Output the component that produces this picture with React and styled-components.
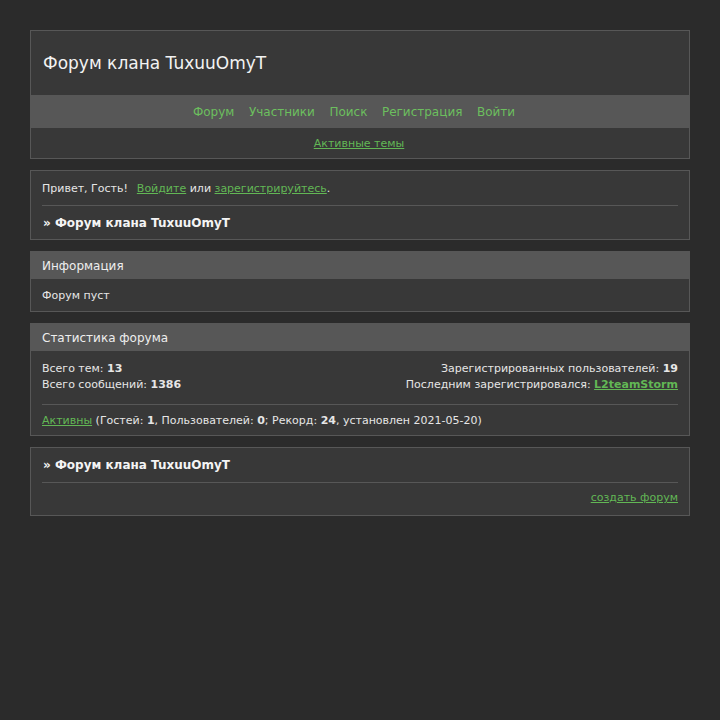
import React from 'react'
import styled, { createGlobalStyle } from 'styled-components'

const GlobalStyle = createGlobalStyle`
  html, body {
    margin: 0;
    padding: 0;
    background: #2b2b2b;
    color: #e6e6e6;
    font-family: "DejaVu Sans", "Liberation Sans", sans-serif;
    font-size: 11px;
  }
`

const Page = styled.div`
  width: 660px;
  margin: 0 auto;
  padding: 30px 0;
  display: flex;
  flex-direction: column;
  gap: 11px;
`

const Panel = styled.div`
  background: #383838;
  border: 1px solid #575757;
`

const Title = styled.h1`
  margin: 0;
  height: 64px;
  display: flex;
  align-items: center;
  padding: 0 12px;
  font-size: 17px;
  font-weight: normal;
  color: #f2f2f2;
`

const NavBar = styled.nav`
  background: #575757;
  height: 33px;
  display: flex;
  justify-content: center;
  align-items: center;
  gap: 14.5px;
  padding-right: 12px;
  font-size: 12px;
`

const NavLink = styled.a`
  color: #6cbf5e;
  text-decoration: none;
`

const SubNav = styled.div`
  height: 30px;
  display: flex;
  justify-content: center;
  align-items: center;
  padding-right: 2px;
`

const Link = styled.a`
  color: #62b755;
  text-decoration: underline;
  font-weight: ${(p) => (p.$bold ? 'bold' : 'normal')};
`

const Body = styled.div`
  padding: 0 11px;
`

const Row = styled.div`
  padding: ${(p) => p.$pad || '9px 0 7px'};
  line-height: 16px;
  display: ${(p) => (p.$split ? 'flex' : 'block')};
  justify-content: space-between;
  text-align: ${(p) => (p.$right ? 'right' : 'left')};
`

const Divider = styled.div`
  border-top: 1px solid #575757;
`

const Crumb = styled.div`
  padding: ${(p) => p.$pad || '9px 1px 7px'};
  font-size: 12px;
  font-weight: bold;
  line-height: 17px;
  color: #f4f4f4;
`

const Head = styled.div`
  background: #575757;
  height: 27px;
  display: flex;
  align-items: center;
  padding: 0 11px;
  font-size: 12px;
  color: #eeeeee;
`

const Col = styled.div`
  display: flex;
  flex-direction: column;
  align-items: ${(p) => (p.$end ? 'flex-end' : 'flex-start')};
`

const Gap = styled.span`
  display: inline-block;
  width: ${(p) => p.$w}px;
`

export default function App() {
  return (
    <>
      <GlobalStyle />
      <Page>
        <Panel>
          <Title>Форум клана TuxuuOmyT</Title>
          <NavBar>
            <NavLink href="#">Форум</NavLink>
            <NavLink href="#">Участники</NavLink>
            <NavLink href="#">Поиск</NavLink>
            <NavLink href="#">Регистрация</NavLink>
            <NavLink href="#">Войти</NavLink>
          </NavBar>
          <SubNav>
            <Link href="#">Активные темы</Link>
          </SubNav>
        </Panel>

        <Panel>
          <Body>
            <Row $pad="10px 0 8px">
              Привет, Гость!<Gap $w={9} /><Link href="#">Войдите</Link> или <Link href="#">зарегистрируйтесь</Link>.
            </Row>
            <Divider />
            <Crumb>» Форум клана TuxuuOmyT</Crumb>
          </Body>
        </Panel>

        <Panel>
          <Head>Информация</Head>
          <Body>
            <Row>Форум пуст</Row>
          </Body>
        </Panel>

        <Panel>
          <Head>Статистика форума</Head>
          <Body>
            <Row $split $pad="10px 0 11px">
              <Col>
                <span>Всего тем: <b>13</b></span>
                <span>Всего сообщений: <b>1386</b></span>
              </Col>
              <Col $end>
                <span>Зарегистрированных пользователей: <b>19</b></span>
                <span>Последним зарегистрировался: <Link href="#" $bold>L2teamStorm</Link></span>
              </Col>
            </Row>
            <Divider />
            <Row $pad="8px 0 6px">
              <Link href="#">Активны</Link> (Гостей: <b>1</b>, Пользователей: <b>0</b>; Рекорд: <b>24</b>, установлен 2021-05-20)
            </Row>
          </Body>
        </Panel>

        <Panel>
          <Body>
            <Crumb $pad="9px 1px 8px">» Форум клана TuxuuOmyT</Crumb>
            <Divider />
            <Row $right $pad="7px 0 9px">
              <Link href="#">создать форум</Link>
            </Row>
          </Body>
        </Panel>
      </Page>
    </>
  )
}
